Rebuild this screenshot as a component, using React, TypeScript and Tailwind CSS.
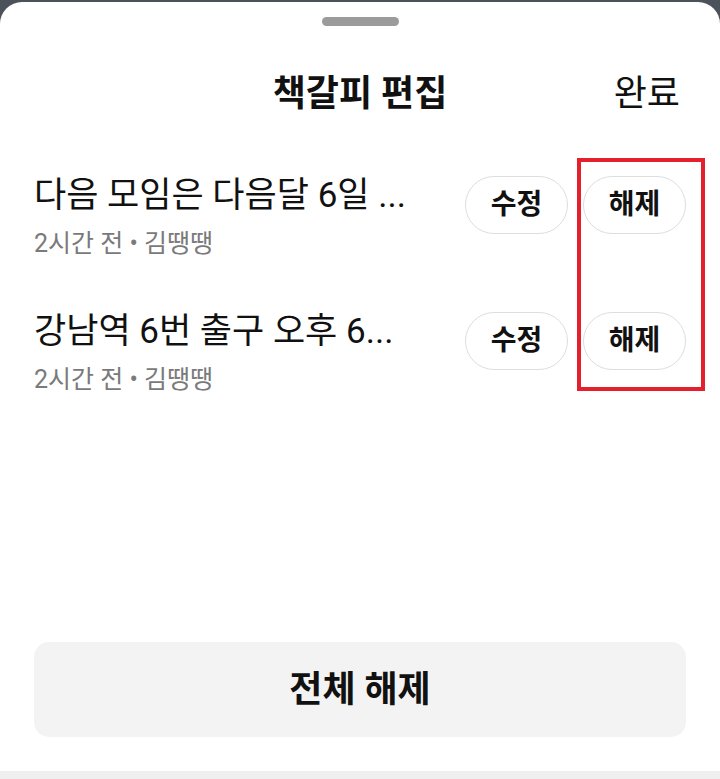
const bookmarks = [
  { id: 1, title: "다음 모임은 다음달 6일 ...", meta: "2시간 전 • 김땡땡" },
  { id: 2, title: "강남역 6번 출구 오후 6...", meta: "2시간 전 • 김땡땡" },
];

const PillButton = ({ label }: { label: string }) => (
  <button
    type="button"
    className="h-[58px] w-[103px] rounded-full border border-[#dedede] bg-white text-[28px] font-bold text-[#111] leading-none"
  >
    {label}
  </button>
);

const App = () => {
  return (
    <div
      className="relative w-[720px] h-[779px] bg-[#4b5259] pt-[2px] flex flex-col overflow-hidden"
      style={{ fontFamily: 'Roboto, "Noto Sans CJK KR", sans-serif' }}
    >
      <div className="flex-1 bg-white rounded-t-[22px] flex flex-col">
        <div className="mx-auto mt-[15px] w-[77px] h-[9px] rounded-full bg-[#9b9b9b]" />

        <div className="relative mt-[38px] h-[60px] flex items-center justify-center">
          <h1 className="text-[36px] font-bold text-[#111] leading-none">책갈피 편집</h1>
          <button
            type="button"
            className="absolute right-[40px] text-[36px] text-[#111] leading-none"
          >
            완료
          </button>
        </div>

        <ul className="mt-[52px] flex flex-col">
          {bookmarks.map((b) => (
            <li key={b.id} className="h-[136px] flex items-start px-[34px]">
              <div className="flex-1 min-w-0">
                <p className="text-[35px] leading-[40px] text-[#111] whitespace-nowrap">
                  {b.title}
                </p>
                <p className="mt-[13px] text-[25px] leading-[30px] text-[#7a7a7a]">
                  {b.meta}
                </p>
              </div>
              <div className="flex gap-[15px]">
                <PillButton label="수정" />
                <PillButton label="해제" />
              </div>
            </li>
          ))}
        </ul>

        <button
          type="button"
          className="mt-auto mx-[34px] mb-[34px] h-[95px] rounded-[15px] bg-[#f3f3f3] text-[36px] font-bold text-[#111]"
        >
          전체 해제
        </button>
      </div>
      <div className="h-[8px] bg-[#efefef]" />

      {/* highlight around the unpin column */}
      <div className="absolute left-[577px] top-[158px] w-[128px] h-[233px] border-4 border-[#e3202b]" />
    </div>
  );
};

export default App;
